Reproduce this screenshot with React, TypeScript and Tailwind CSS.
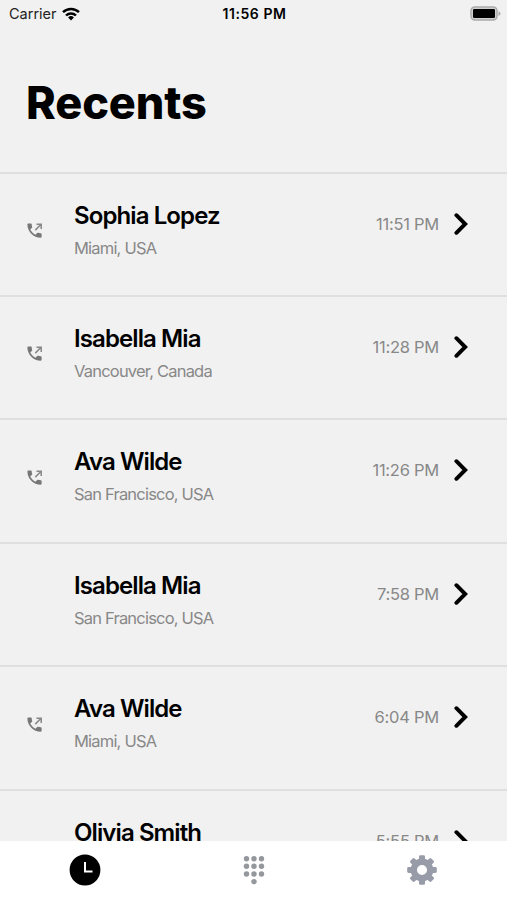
import React from "react";

type Call = { name: string; place: string; time: string; outgoing: boolean };

const calls: Call[] = [
  { name: "Sophia Lopez", place: "Miami, USA", time: "11:51 PM", outgoing: true },
  { name: "Isabella Mia", place: "Vancouver, Canada", time: "11:28 PM", outgoing: true },
  { name: "Ava Wilde", place: "San Francisco, USA", time: "11:26 PM", outgoing: true },
  { name: "Isabella Mia", place: "San Francisco, USA", time: "7:58 PM", outgoing: false },
  { name: "Ava Wilde", place: "Miami, USA", time: "6:04 PM", outgoing: true },
  { name: "Olivia Smith", place: "Miami, USA", time: "5:55 PM", outgoing: false },
];

function OutgoingIcon() {
  return (
    <svg viewBox="0 0 24 24" className="block size-[19px]" fill="#777">
      <path d="M20 15.5c-1.25 0-2.45-.2-3.57-.57-.35-.11-.74-.03-1.02.24l-2.2 2.2c-2.83-1.44-5.15-3.75-6.59-6.59l2.2-2.21c.28-.26.36-.65.25-1C8.7 6.45 8.5 5.25 8.5 4c0-.55-.45-1-1-1H4c-.55 0-1 .45-1 1 0 9.39 7.61 17 17 17 .55 0 1-.45 1-1v-3.5c0-.55-.45-1-1-1z" />
      <path d="M14.500 4h6v6M20 4.500l-7 7" fill="none" stroke="#888" strokeWidth="1.900" />
    </svg>
  );
}

function Row({ call }: { call: Call }) {
  return (
    <li className="flex h-[123.4px] shrink-0 border-t-2 border-[#dfdfdf] pr-[39px] pl-[25px]">
      <div className="w-[49px] shrink-0 pt-[47.5px]">{call.outgoing && <OutgoingIcon />}</div>
      <div className="flex-1 pt-[27px] whitespace-nowrap">
        <div className="text-[24px] leading-[30px] font-semibold tracking-[-0.9px] text-black">{call.name}</div>
        <div className="mt-[5px] text-[16.5px] leading-[24px] tracking-[-0.8px] text-[#888]">{call.place}</div>
      </div>
      <div className="mt-[38px] flex h-[24px] items-center whitespace-nowrap">
        <span className="text-[16.5px] leading-[24px] tracking-[-0.25px] text-[#888]">{call.time}</span>
        <svg viewBox="0 0 14 24" className="ml-[15px] h-[24px] w-[14px]" fill="none" stroke="#000" strokeWidth="3.900">
          <path d="M2.400 3.200l8.800 8.800-8.800 8.800" strokeLinecap="round" />
        </svg>
      </div>
    </li>
  );
}

export default function App() {
  return (
    <div className="flex h-[900px] w-[507px] flex-col overflow-hidden bg-[#f1f1f1] font-['Inter','Liberation_Sans',sans-serif]">
      <header className="grid h-[27px] shrink-0 grid-cols-3 items-center pr-[6px] pl-[9px] text-black">
        <div className="flex items-center gap-[5px] text-[14.5px] text-[#222]">
          <span>Carrier</span>
          <svg viewBox="0 0 18 14" className="h-[14px] w-[18px]" fill="none" stroke="#000" strokeWidth="2.400">
            <path d="M1 5.200a11.500 11.500 0 0 1 16 0M4 8.500a7.200 7.200 0 0 1 10 0" />
            <path d="M9 13.500l-2.900-3a4.200 4.200 0 0 1 5.800 0z" fill="#000" stroke="none" />
          </svg>
        </div>
        <div className="pr-[1px] text-center text-[14px] font-semibold tracking-[0.55px] whitespace-nowrap">11:56 PM</div>
        <svg viewBox="0 0 31 15" className="h-[15px] w-[31px] justify-self-end">
          <rect x="1" y="1" width="26" height="13" rx="3.800" fill="#d0d0d0" stroke="#aaa" strokeWidth="1.500" />
          <rect x="3" y="3" width="22" height="9" rx="1.200" fill="#000" />
          <path d="M28.500 5v5q2-1 2-2.500t-2-2.500" fill="#aaa" />
        </svg>
      </header>
      <div className="h-[144.6px] shrink-0 pt-[48px] pl-[26px]">
        <h1 className="text-[45px] leading-[56px] font-extrabold tracking-[-0.1px] text-black">Recents</h1>
      </div>
      <ul className="flex min-h-0 flex-1 flex-col overflow-hidden">
        {calls.map((call, i) => (
          <Row key={i} call={call} />
        ))}
      </ul>
      <nav className="grid h-[59px] shrink-0 grid-cols-3 justify-items-center bg-white pt-[13px]">
        <svg viewBox="0 0 32 32" className="size-[32px]">
          <circle cx="16" cy="16" r="15.400" fill="#000" />
          <path d="M16 8v9.500h7.500" fill="none" stroke="#fff" strokeWidth="2" />
        </svg>
        <svg viewBox="0 0 32 32" className="size-[32px]" fill="#94979c">
          {[8.5, 16, 23.5].map((x) => [4.7, 12.3, 20].map((y) => <circle key={`${x}-${y}`} cx={x} cy={y} r="2.700" />))}
          <circle cx="16" cy="27.600" r="2.700" />
        </svg>
        <svg viewBox="0 0 32 32" className="mr-[1px] size-[32px]" fill="#979ca8">
          <circle cx="16" cy="16" r="8.200" fill="none" stroke="#979ca8" strokeWidth="6.400" />
          {[0, 45, 90, 135, 180, 225, 270, 315].map((a) => (
            <rect key={a} x="13" y="1.200" width="6" height="7" rx="1.400" transform={`rotate(${a} 16 16)`} />
          ))}
        </svg>
      </nav>
    </div>
  );
}
